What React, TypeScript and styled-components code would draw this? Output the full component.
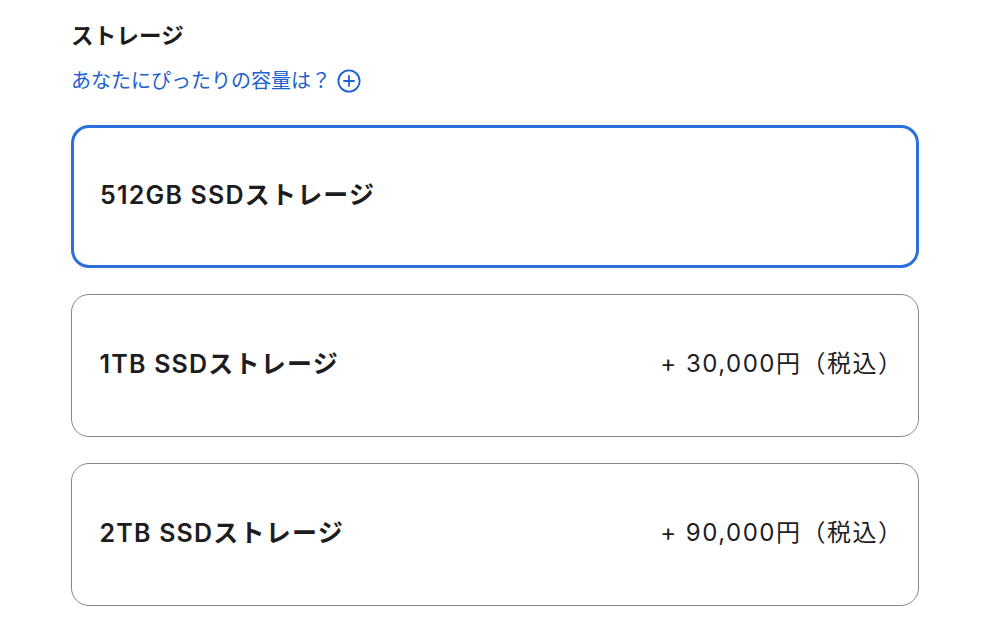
import React from 'react';
import styled, { createGlobalStyle } from 'styled-components';

const GlobalStyle = createGlobalStyle`
  html, body {
    margin: 0;
    padding: 0;
    background: #fff;
  }
  body {
    font-family: 'Inter', 'Noto Sans CJK JP', sans-serif;
    color: #1d1d1f;
  }
`;

const Page = styled('section')({
  width: '848px',
  padding: '20px 0 0 71px',
});

const Title = styled('h2')({
  margin: 0,
  fontSize: '22.5px',
  lineHeight: '32px',
  fontWeight: 700,
  letterSpacing: '0.2px',
});

const HelpLink = styled('a')({
  display: 'inline-flex',
  alignItems: 'center',
  gap: '6px',
  marginTop: '15px',
  fontSize: '20px',
  lineHeight: '28px',
  color: '#1d62cf',
  textDecoration: 'none',
  cursor: 'pointer',
});

const OptionList = styled('div')({
  display: 'flex',
  flexDirection: 'column',
  gap: '26px',
  marginTop: '30px',
});

const OptionCard = styled('label')(({ selected = false }: { selected?: boolean }) => ({
  boxSizing: 'border-box',
  height: '143px',
  display: 'flex',
  alignItems: 'center',
  justifyContent: 'space-between',
  borderRadius: '18px',
  cursor: 'pointer',
  ...(selected
    ? { border: '3px solid #2a6fdb', padding: '0 28px 8px 26px' }
    : { border: '1.5px solid #86868b', padding: '0 29.5px 8px 27.5px' }),
}));

const OptionName = styled('span')({
  fontSize: '25px',
  fontWeight: 600,
  letterSpacing: '1.2px',
});

const OptionPrice = styled('span')({
  fontSize: '24px',
  fontWeight: 400,
  letterSpacing: '1.5px',
  marginRight: '-15px',
});

const PlusCircle = () => (
  <svg width="24" height="24" viewBox="0 0 24 24" fill="none" stroke="currentColor" strokeWidth="1.8" strokeLinecap="round">
    <circle cx="12" cy="12" r="10.6" />
    <path d="M12 7v10M7 12h10" />
  </svg>
);

const options = [
  { id: 1, name: '512GB SSDストレージ', price: '', selected: true },
  { id: 2, name: '1TB SSDストレージ', price: '+ 30,000円（税込）', selected: false },
  { id: 3, name: '2TB SSDストレージ', price: '+ 90,000円（税込）', selected: false },
];

const App = (): JSX.Element => (
  <>
    <GlobalStyle />
    <Page>
      <Title>ストレージ</Title>
      <HelpLink>
        あなたにぴったりの容量は？
        <PlusCircle />
      </HelpLink>
      <OptionList>
        {options.map(({ id, name, price, selected }) => (
          <OptionCard key={id} selected={selected}>
            <OptionName>{name}</OptionName>
            {price && <OptionPrice>{price}</OptionPrice>}
          </OptionCard>
        ))}
      </OptionList>
    </Page>
  </>
);

export default App;
